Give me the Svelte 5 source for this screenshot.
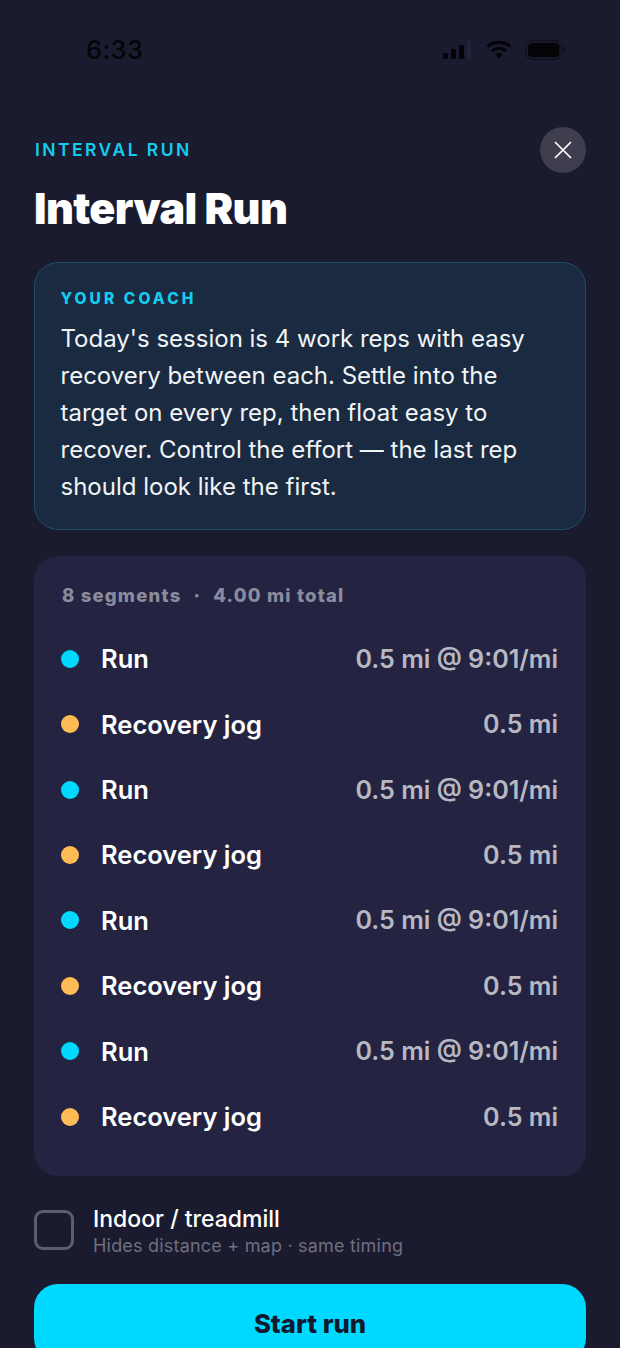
<script>
  const rows = [0,1,2,3,4,5,6,7].map((i) => i % 2 === 0
    ? { kind: 'run', name: 'Run', detail: '0.5 mi @ 9:01/mi' }
    : { kind: 'rec', name: 'Recovery jog', detail: '0.5 mi' });
</script>

<div class="page">
  <div class="status">
    <span class="time">6:33</span>
    <div class="sysicons">
      <svg class="signal" width="30" height="20" viewBox="0 0 30 20">
        <rect x="0" y="13" width="5" height="6" rx="1.2" fill="#050508"/>
        <rect x="8" y="9" width="5" height="10" rx="1.2" fill="#050508"/>
        <rect x="16" y="5" width="5" height="14" rx="1.2" fill="#050508"/>
        <rect x="24" y="0" width="4" height="19" rx="1.2" fill="#23233a"/>
      </svg>
      <svg class="wifi" width="26" height="20" viewBox="0 0 26 20">
        <path d="M1.5 6.5C7.8 .9 18.2 .9 24.5 6.5" fill="none" stroke="#050508" stroke-width="3.2"/>
        <path d="M6 11C10 7.6 16 7.6 20 11" fill="none" stroke="#050508" stroke-width="3.2"/>
        <path d="M9.2 14.2L13 18.4L16.8 14.2C14.6 12.4 11.4 12.4 9.2 14.2Z" fill="#050508"/>
      </svg>
      <svg class="battery" width="40" height="20" viewBox="0 0 40 20">
        <rect x="0.75" y="0.75" width="36" height="18.5" rx="6" fill="none" stroke="#12121f" stroke-width="1.5"/>
        <rect x="3" y="3" width="31.5" height="14" rx="4" fill="#050508"/>
        <rect x="38" y="7" width="1.6" height="6" rx="0.8" fill="#12121f"/>
      </svg>
    </div>
  </div>

  <header class="head">
    <div class="titles">
      <div class="eyebrow">INTERVAL RUN</div>
      <h1>Interval Run</h1>
    </div>
    <button class="close" aria-label="Close">
      <svg width="18" height="18" viewBox="0 0 18 18">
        <path d="M1.5 1.5L16.5 16.5M16.5 1.5L1.5 16.5" stroke="#fff" stroke-width="1.7" stroke-linecap="round"/>
      </svg>
    </button>
  </header>

  <section class="coach">
    <div class="coach-label">YOUR COACH</div>
    <p>Today's session is 4 work reps with easy recovery between each. Settle into the target on every rep, then float easy to recover. Control the effort — the last rep should look like the first.</p>
  </section>

  <section class="list">
    <div class="summary"><span>8 segments</span><span class="sep">·</span><span>4.00 mi total</span></div>
    {#each rows as row}
      <div class="row">
        <span class="dot {row.kind}"></span>
        <span class="name">{row.name}</span>
        <span class="detail">{row.detail}</span>
      </div>
    {/each}
  </section>

  <div class="indoor">
    <span class="check"></span>
    <div class="indoor-text">
      <div class="indoor-title">Indoor / treadmill</div>
      <div class="indoor-sub">Hides distance + map · same timing</div>
    </div>
  </div>

  <button class="start">Start run</button>
</div>

<style>
  :global(html), :global(body) {
    margin: 0;
    height: 1348px;
    overflow: hidden;
    background: #1b1b2f;
  }
  .page {
    box-sizing: border-box;
    width: 620px;
    height: 1348px;
    overflow: hidden;
    padding: 0 34px;
    background: #1b1b2f;
    font-family: Inter, "Liberation Sans", sans-serif;
    color: #fff;
  }
  .status {
    height: 100px;
    margin: 0 -34px;
    padding: 0 55px 0 86px;
    box-sizing: border-box;
    display: flex;
    justify-content: space-between;
    align-items: flex-start;
  }
  .time {
    margin-top: 35px;
    font-size: 25.5px;
    line-height: 30px;
    font-weight: 500;
    color: #050508;
    letter-spacing: 0.4px;
  }
  .sysicons {
    margin-top: 40px;
    display: flex;
    align-items: center;
    gap: 13px;
  }
  .head {
    display: flex;
    justify-content: space-between;
    align-items: flex-start;
    margin-top: 27px;
    height: 135px;
  }
  .eyebrow {
    margin-top: 13px;
    margin-left: 1px;
    font-size: 17.5px;
    line-height: 20px;
    font-weight: 600;
    letter-spacing: 2.45px;
    color: #12cdf0;
  }
  h1 {
    margin: 22px 0 0;
    font-size: 43px;
    line-height: 52px;
    font-weight: 900;
    letter-spacing: -0.62px;
    color: #fff;
  }
  .close {
    width: 46px;
    height: 46px;
    border: 0;
    padding: 0;
    border-radius: 50%;
    background: #3e3e4e;
    display: flex;
    align-items: center;
    justify-content: center;
  }
  .coach {
    box-sizing: border-box;
    height: 268px;
    padding: 26px 25.5px 0;
    border: 1.5px solid #1f4f6a;
    border-radius: 24px;
    background: #1a2a40;
  }
  .coach-label {
    font-size: 15.5px;
    line-height: 20px;
    font-weight: 800;
    letter-spacing: 3.1px;
    color: #12cdf0;
  }
  .coach p {
    margin: 11px 0 0;
    font-size: 24px;
    line-height: 37px;
    font-weight: 400;
    color: #f1f4f7;
  }
  .list {
    box-sizing: border-box;
    margin-top: 26px;
    height: 620px;
    padding: 27px 28px 0 27px;
    border-radius: 24px;
    background: #242442;
  }
  .summary {
    display: flex;
    gap: 12px;
    padding-left: 1px;
    font-size: 18.5px;
    line-height: 24px;
    font-weight: 800;
    letter-spacing: 1.2px;
    color: #8b8b9e;
    margin-bottom: 19px;
  }
  .row {
    display: flex;
    align-items: center;
    height: 65.43px;
  }
  .dot {
    width: 18px;
    height: 18px;
    border-radius: 50%;
    margin-right: 22px;
    flex: none;
  }
  .dot.run { background: #00d9ff; }
  .dot.rec { background: #ffbb55; }
  .name {
    flex: 1;
    font-size: 25.5px;
    font-weight: 600;
    color: #fff;
  }
  .detail {
    font-size: 25.1px;
    font-weight: 600;
    color: #b8b8c2;
  }
  .indoor {
    display: flex;
    align-items: flex-start;
    gap: 19px;
    margin-top: 29px;
    height: 54px;
  }
  .check {
    box-sizing: border-box;
    width: 40px;
    height: 40px;
    margin-top: 5px;
    border: 3px solid #5d5d6d;
    border-radius: 9px;
    flex: none;
  }
  .indoor-title {
    font-size: 23px;
    line-height: 28px;
    font-weight: 500;
    color: #fff;
  }
  .indoor-sub {
    font-size: 18px;
    line-height: 26px;
    color: #6f6f80;
    letter-spacing: 0.2px;
  }
  .start {
    display: block;
    width: 100%;
    height: 78px;
    margin-top: 25px;
    border: 0;
    border-radius: 24px;
    background: #00d9ff;
    color: #10192e;
    font-family: Inter, sans-serif;
    font-size: 25.7px;
    font-weight: 800;
  }
</style>
